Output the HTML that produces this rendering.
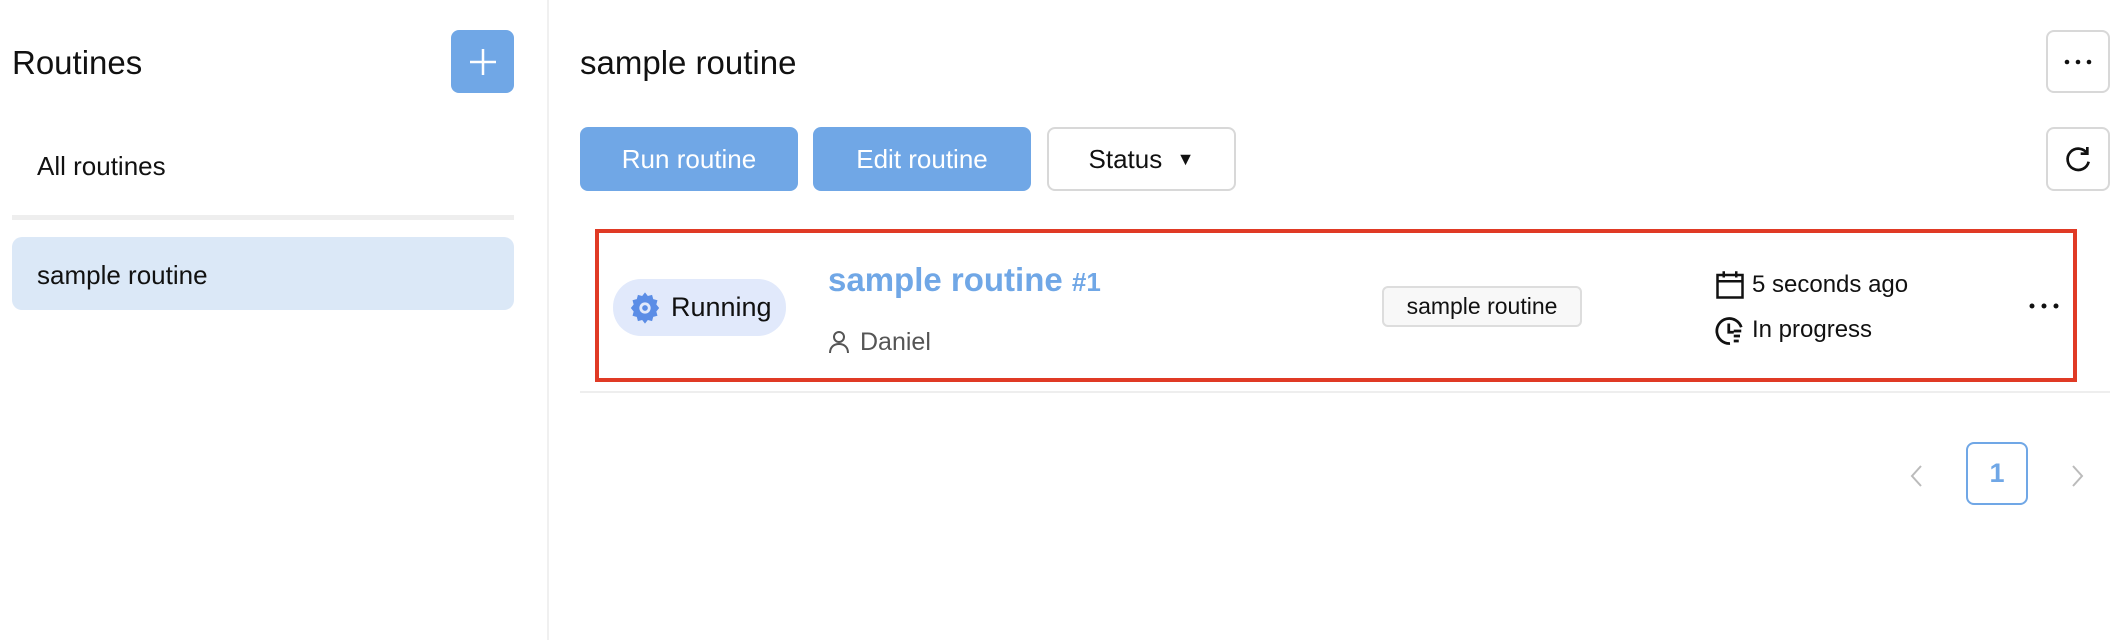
<!DOCTYPE html>
<html><head><meta charset="utf-8"><style>
*{box-sizing:border-box;margin:0;padding:0}
body{width:2122px;height:640px;background:#fff;font-family:"Liberation Sans",sans-serif;color:#111;position:relative;overflow:hidden}
.a{position:absolute;white-space:nowrap}
.btn{position:absolute;border-radius:8px;display:flex;align-items:center;justify-content:center}
.blue{background:#70a7e6;color:#fff;font-size:26px}
.out{border:2px solid #d8d8d8;background:#fff}
</style></head><body>
<div class="a" style="left:547px;top:0;width:2px;height:640px;background:#f0f0f0"></div>
<div class="a" style="left:12px;top:44px;font-size:33px">Routines</div>
<div class="btn blue" style="left:451px;top:30px;width:63px;height:63px"><svg width="30" height="30" viewBox="0 0 30 30" stroke="#fff" stroke-width="2.5"><path d="M15 2v26M2 15h26"/></svg></div>
<div class="a" style="left:37px;top:151px;font-size:26px">All routines</div>
<div class="a" style="left:12px;top:215px;width:502px;height:5px;background:#eee"></div>
<div class="a" style="left:12px;top:237px;width:502px;height:73px;background:#dbe8f7;border-radius:10px"></div>
<div class="a" style="left:37px;top:260px;font-size:26px">sample routine</div>
<div class="a" style="left:580px;top:44px;font-size:33px">sample routine</div>
<div class="btn out" style="left:2046px;top:30px;width:64px;height:63px"><svg width="30" height="6" viewBox="0 0 30 6" fill="#111"><circle cx="4" cy="3" r="2.3"/><circle cx="15" cy="3" r="2.3"/><circle cx="26" cy="3" r="2.3"/></svg></div>
<div class="btn blue" style="left:580px;top:127px;width:218px;height:64px">Run routine</div>
<div class="btn blue" style="left:813px;top:127px;width:218px;height:64px">Edit routine</div>
<div class="btn out" style="left:1047px;top:127px;width:189px;height:64px;font-size:26px">Status&nbsp;&nbsp;<span style="font-size:18px">▼</span></div>
<div class="btn out" style="left:2046px;top:127px;width:64px;height:64px">
<svg width="32" height="32" viewBox="0 0 24 24" fill="none" stroke="#111" stroke-width="2"><path d="M19 8A8 8 0 1 0 20 14"/><path d="M19 3v5h-5"/></svg></div>
<div class="a" style="left:595px;top:229px;width:1482px;height:153px;border:4px solid #e03a25"></div>
<div class="a" style="left:613px;top:279px;width:173px;height:57px;background:#e1e9fb;border-radius:28px"></div>
<svg class="a" style="left:628px;top:291px" width="34" height="34" viewBox="0 0 24 24"><path fill="#5b8de6" d="M12 1l2 2.5 3-.8.8 3 3 .8-.8 3L22 12l-2 2.5.8 3-3 .8-.8 3-3-.8L12 23l-2-2.5-3 .8-.8-3-3-.8.8-3L2 12l2-2.5-.8-3 3-.8.8-3 3 .8z"/><circle cx="12" cy="12" r="4" fill="#e1e9fb"/><circle cx="12" cy="12" r="2" fill="#5b8de6"/></svg>
<div class="a" style="left:671px;top:292px;font-size:27px">Running</div>
<div class="a" style="left:828px;top:261px;font-size:33px;color:#70a7e6;font-weight:bold">sample routine <span style="font-size:26px">#1</span></div>
<svg class="a" style="left:828px;top:330px" width="22" height="24" viewBox="0 0 22 24" fill="none" stroke="#555" stroke-width="2"><circle cx="11" cy="7" r="5"/><path d="M2 23c0-6 4-9 9-9s9 3 9 9"/></svg>
<div class="a" style="left:860px;top:328px;font-size:25px;color:#555">Daniel</div>
<div class="a" style="left:1382px;top:286px;width:200px;height:41px;border:2px solid #ddd;border-radius:6px;background:#f8f8f8;font-size:23px;display:flex;align-items:center;justify-content:center">sample routine</div>
<svg class="a" style="left:1715px;top:270px" width="30" height="30" viewBox="0 0 24 24" fill="none" stroke="#111" stroke-width="2"><rect x="2" y="4" width="20" height="18"/><path d="M2 9h20M7 1v5M17 1v5"/></svg>
<div class="a" style="left:1752px;top:271px;font-size:24px">5 seconds ago</div>
<svg class="a" style="left:1715px;top:316px" width="30" height="30" viewBox="0 0 24 24" fill="none" stroke="#111" stroke-width="2.2"><path d="M21 9A10 10 0 1 0 12 22"/><path d="M11 6v7h4M15 12h6M15 16h5M15 20h4"/></svg>
<div class="a" style="left:1752px;top:316px;font-size:24px">In progress</div>
<svg class="a" style="left:2028px;top:303px" width="32" height="6" viewBox="0 0 32 6" fill="#111"><circle cx="4" cy="3" r="2.5"/><circle cx="16" cy="3" r="2.5"/><circle cx="28" cy="3" r="2.5"/></svg>
<div class="a" style="left:580px;top:391px;width:1530px;height:2px;background:#eee"></div>
<svg class="a" style="left:1909px;top:464px" width="14" height="24" viewBox="0 0 14 24" fill="none" stroke="#bbb" stroke-width="2"><path d="M12 2L3 12l9 10"/></svg>
<div class="btn" style="left:1966px;top:442px;width:62px;height:63px;border:2px solid #70a7e6;color:#70a7e6;font-size:27px;font-weight:bold">1</div>
<svg class="a" style="left:2071px;top:464px" width="14" height="24" viewBox="0 0 14 24" fill="none" stroke="#bbb" stroke-width="2"><path d="M2 2l9 10-9 10"/></svg>
</body></html>
